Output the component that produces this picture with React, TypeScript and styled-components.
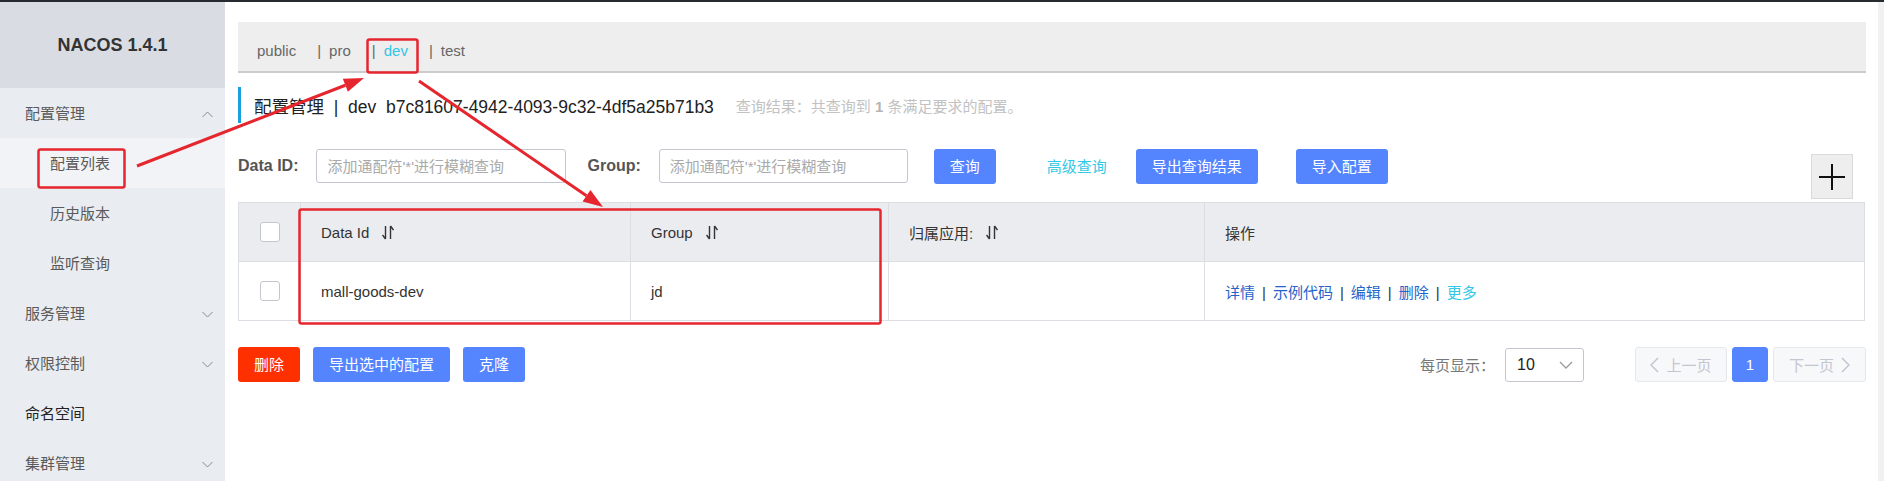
import React from 'react';
import styled, { createGlobalStyle } from 'styled-components';

const GlobalStyle = createGlobalStyle`
  html, body {
    margin: 0;
    padding: 0;
    background: #fff;
  }
  body {
    font-family: "Liberation Sans", "Noto Sans CJK SC", sans-serif;
    font-size: 15px;
    color: #333;
  }
  * {
    box-sizing: border-box;
  }
`;

const Page = styled.div`
  position: relative;
  width: 1884px;
  height: 481px;
  overflow: hidden;
  border-top: 2px solid #272b30;
  display: flex;
`;

const Sidebar = styled.aside`
  width: 225px;
  flex-shrink: 0;
  background: #e9ecf0;
  display: flex;
  flex-direction: column;
  overflow: hidden;
`;

const Brand = styled.div`
  height: 86px;
  flex-shrink: 0;
  background: #d9dde3;
  display: flex;
  align-items: center;
  justify-content: center;
  font-size: 18px;
  font-weight: bold;
  color: #333;
`;

const MenuItem = styled.div<{ sub?: boolean; active?: boolean; strong?: boolean }>`
  height: 50px;
  flex-shrink: 0;
  display: flex;
  align-items: center;
  justify-content: space-between;
  padding: 2px 12px 0 ${p => (p.sub ? '50px' : '25px')};
  background: ${p => (p.active ? '#f2f3f6' : 'transparent')};
  color: ${p => (p.strong ? '#222' : '#5a5a5a')};
  font-size: 15px;
  line-height: 20px;
`;

const Main = styled.main`
  flex: 1;
  padding: 20px 12px 0 13px;
  display: flex;
  flex-direction: column;
`;

const ScrollTrack = styled.div`
  width: 6px;
  flex-shrink: 0;
  background: #f1f1f1;
`;

const TabBar = styled.div`
  height: 51px;
  flex-shrink: 0;
  background: #eeeeee;
  border-bottom: 2px solid #cccccc;
  display: flex;
  align-items: center;
  padding: 8px 0 0 19px;
  font-size: 15px;
  line-height: 20px;
`;

const Tab = styled.span<{ current?: boolean }>`
  color: ${p => (p.current ? '#33c5e5' : '#666')};
  margin-right: 21px;
`;

const TabSep = styled.span`
  color: #666;
  margin-right: 8px;
`;

const TitleRow = styled.div`
  margin-top: 14px;
  height: 36px;
  flex-shrink: 0;
  border-left: 3px solid #1a9fe0;
  padding-left: 13px;
  display: flex;
  align-items: center;
`;

const TitleText = styled.span`
  font-size: 17.5px;
  color: #222;
  white-space: pre;
`;

const ResultText = styled.span`
  margin-left: 22px;
  font-size: 15px;
  color: #c2c2c2;
  b {
    font-weight: bold;
    color: #b5b5b5;
  }
`;

const SearchRow = styled.div`
  margin-top: 26px;
  display: flex;
  align-items: flex-start;
`;

const FieldLabel = styled.label<{ gap?: number }>`
  height: 34px;
  display: flex;
  align-items: center;
  font-size: 16px;
  font-weight: bold;
  color: #555;
  margin-left: ${p => p.gap ?? 0}px;
  margin-right: 18px;
`;

const Input = styled.input<{ w: number }>`
  width: ${p => p.w}px;
  height: 34px;
  border: 1px solid #c4c6cf;
  border-radius: 3px;
  padding: 0 10px;
  font-family: inherit;
  font-size: 15px;
  outline: none;
  &::placeholder {
    color: #aaa;
  }
`;

const Button = styled.button<{ tone?: 'primary' | 'danger' | 'link'; gap?: number }>`
  height: 35px;
  padding: 0 16px;
  border: none;
  border-radius: 3px;
  font-family: inherit;
  font-size: 15px;
  line-height: 35px;
  margin-left: ${p => p.gap ?? 0}px;
  color: ${p => (p.tone === 'link' ? '#33c8e6' : '#fff')};
  background: ${p =>
    p.tone === 'danger' ? '#ff3000' : p.tone === 'link' ? 'transparent' : '#5584ff'};
  cursor: pointer;
`;

const AddButton = styled.button`
  margin-left: auto;
  margin-top: 5px;
  margin-right: 13px;
  width: 42px;
  height: 45px;
  background: #eeeeee;
  border: 1px solid #dadada;
  display: flex;
  align-items: center;
  justify-content: center;
  padding: 0;
`;

const Table = styled.table`
  margin-top: 3px;
  width: 1626px;
  border-collapse: collapse;
  table-layout: fixed;
  border: 1px solid #dcdee3;
`;

const Th = styled.th<{ w: number }>`
  width: ${p => p.w}px;
  height: 59px;
  background: #ebecf0;
  border: 1px solid #dcdee3;
  text-align: left;
  padding: 0 20px;
  font-weight: normal;
  font-size: 15px;
  color: #333;
`;

const Td = styled.td`
  height: 59px;
  border: 1px solid #dcdee3;
  padding: 0 20px;
  font-size: 15px;
  color: #333;
`;

const CheckCell = styled.div`
  display: flex;
  justify-content: center;
`;

const Checkbox = styled.span`
  display: block;
  width: 20px;
  height: 20px;
  border: 1px solid #c4c6cf;
  border-radius: 3px;
  background: #fff;
`;

const HeadLabel = styled.span`
  display: inline-flex;
  align-items: center;
  gap: 13px;
`;

const Action = styled.a<{ more?: boolean }>`
  color: ${p => (p.more ? '#33c8e6' : '#2463c9')};
  text-decoration: none;
`;

const ActionSep = styled.span`
  color: #333;
  margin: 0 7px;
`;

const FooterRow = styled.div`
  margin-top: 26px;
  display: flex;
  align-items: center;
`;

const PagerGroup = styled.div`
  margin-left: auto;
  display: flex;
  align-items: center;
`;

const PageSizeLabel = styled.span`
  color: #777;
  font-size: 15px;
  margin-right: 10px;
`;

const Select = styled.div`
  width: 79px;
  height: 34px;
  border: 1px solid #c4c6cf;
  border-radius: 3px;
  display: flex;
  align-items: center;
  justify-content: space-between;
  padding: 0 10px 0 11px;
  font-size: 16px;
  color: #222;
  margin-right: 51px;
`;

const PageBtn = styled.div<{ active?: boolean; w: number; first?: boolean }>`
  width: ${p => p.w}px;
  height: 35px;
  margin-left: ${p => (p.first ? 0 : 5)}px;
  border-radius: 3px;
  display: flex;
  align-items: center;
  justify-content: center;
  gap: 7px;
  font-size: 15px;
  background: ${p => (p.active ? '#5584ff' : '#f7f8fa')};
  border: 1px solid ${p => (p.active ? '#5584ff' : '#e6e7eb')};
  color: ${p => (p.active ? '#fff' : '#c4c6cf')};
`;

const Overlay = styled.svg`
  position: absolute;
  left: 0;
  top: 0;
  pointer-events: none;
`;

const Chevron = ({ up }: { up?: boolean }) => (
  <svg width="11" height="7" viewBox="0 0 11 7">
    <polyline
      points={up ? '0.5,6 5.5,1 10.5,6' : '0.5,1 5.5,6 10.5,1'}
      fill="none"
      stroke="#8a8a8a"
      strokeWidth="1"
    />
  </svg>
);

const SortIcon = () => (
  <svg width="12" height="15" viewBox="0 0 12 15">
    <path d="M3.5 1v13M3.5 14L0.5 10" stroke="#333" strokeWidth="1.4" fill="none" />
    <path d="M8.5 14V1M8.5 1l3 4" stroke="#333" strokeWidth="1.4" fill="none" />
  </svg>
);

const ArrowLeft = () => (
  <svg width="9" height="16" viewBox="0 0 9 16">
    <polyline points="8,1 1,8 8,15" fill="none" stroke="#c4c6cf" strokeWidth="1.5" />
  </svg>
);

const ArrowRight = () => (
  <svg width="9" height="16" viewBox="0 0 9 16">
    <polyline points="1,1 8,8 1,15" fill="none" stroke="#c4c6cf" strokeWidth="1.5" />
  </svg>
);

const menu = [
  { label: '配置管理', chevron: 'up' },
  { label: '配置列表', sub: true, active: true },
  { label: '历史版本', sub: true },
  { label: '监听查询', sub: true },
  { label: '服务管理', chevron: 'down' },
  { label: '权限控制', chevron: 'down' },
  { label: '命名空间', strong: true },
  { label: '集群管理', chevron: 'down' },
];

const namespaces = ['public', 'pro', 'dev', 'test'];

// red annotation arrow, head drawn at (x2, y2)
const Arrow = ({ x1, y1, x2, y2 }: { x1: number; y1: number; x2: number; y2: number }) => {
  const a = Math.atan2(y2 - y1, x2 - x1);
  const len = 20;
  const half = 7;
  const bx = x2 - len * Math.cos(a);
  const by = y2 - len * Math.sin(a);
  const px = -Math.sin(a) * half;
  const py = Math.cos(a) * half;
  return (
    <g>
      <line x1={x1} y1={y1} x2={bx} y2={by} stroke="#e5262e" strokeWidth="3" />
      <polygon
        points={`${x2},${y2} ${bx + px},${by + py} ${bx - px},${by - py}`}
        fill="#e5262e"
      />
    </g>
  );
};

const Annotations = () => (
  <Overlay width="1884" height="481" viewBox="0 0 1884 481">
    <g fill="none" stroke="#e5262e" strokeWidth="2.5">
      <rect x="38.5" y="147.5" width="86" height="38" rx="2" />
      <rect x="367.5" y="37.5" width="50" height="33" rx="2" />
      <rect x="299.5" y="207.5" width="581" height="114" rx="2" />
    </g>
    <Arrow x1={137} y1={164} x2={364} y2={76} />
    <Arrow x1={419} y1={79} x2={603} y2={205} />
  </Overlay>
);

export default function App() {
  return (
    <>
      <GlobalStyle />
      <Page>
        <Sidebar>
          <Brand>NACOS 1.4.1</Brand>
          {menu.map(m => (
            <MenuItem key={m.label} sub={m.sub} active={m.active} strong={m.strong}>
              <span>{m.label}</span>
              {m.chevron && <Chevron up={m.chevron === 'up'} />}
            </MenuItem>
          ))}
        </Sidebar>

        <Main>
          <TabBar>
            {namespaces.map((ns, i) => (
              <React.Fragment key={ns}>
                {i > 0 && <TabSep>|</TabSep>}
                <Tab current={ns === 'dev'}>{ns}</Tab>
              </React.Fragment>
            ))}
          </TabBar>

          <TitleRow>
            <TitleText>{'配置管理  |  dev  b7c81607-4942-4093-9c32-4df5a25b71b3'}</TitleText>
            <ResultText>
              查询结果：共查询到 <b>1</b> 条满足要求的配置。
            </ResultText>
          </TitleRow>

          <SearchRow>
            <FieldLabel>Data ID:</FieldLabel>
            <Input w={250} placeholder="添加通配符'*'进行模糊查询" />
            <FieldLabel gap={21}>Group:</FieldLabel>
            <Input w={249} placeholder="添加通配符'*'进行模糊查询" />
            <Button tone="primary" gap={26}>查询</Button>
            <Button tone="link" gap={35}>高级查询</Button>
            <Button tone="primary" gap={13}>导出查询结果</Button>
            <Button tone="primary" gap={38}>导入配置</Button>
            <AddButton aria-label="新建配置">
              <svg width="26" height="26" viewBox="0 0 26 26">
                <path d="M13 0v26M0 13h26" stroke="#111" strokeWidth="2" />
              </svg>
            </AddButton>
          </SearchRow>

          <Table>
            <thead>
              <tr>
                <Th w={62}>
                  <CheckCell>
                    <Checkbox />
                  </CheckCell>
                </Th>
                <Th w={330}>
                  <HeadLabel>
                    Data Id <SortIcon />
                  </HeadLabel>
                </Th>
                <Th w={258}>
                  <HeadLabel>
                    Group <SortIcon />
                  </HeadLabel>
                </Th>
                <Th w={316}>
                  <HeadLabel>
                    归属应用: <SortIcon />
                  </HeadLabel>
                </Th>
                <Th w={660}>操作</Th>
              </tr>
            </thead>
            <tbody>
              <tr>
                <Td>
                  <CheckCell>
                    <Checkbox />
                  </CheckCell>
                </Td>
                <Td>mall-goods-dev</Td>
                <Td>jd</Td>
                <Td />
                <Td>
                  <Action>详情</Action>
                  <ActionSep>|</ActionSep>
                  <Action>示例代码</Action>
                  <ActionSep>|</ActionSep>
                  <Action>编辑</Action>
                  <ActionSep>|</ActionSep>
                  <Action>删除</Action>
                  <ActionSep>|</ActionSep>
                  <Action more>更多</Action>
                </Td>
              </tr>
            </tbody>
          </Table>

          <FooterRow>
            <Button tone="danger">删除</Button>
            <Button tone="primary" gap={13}>导出选中的配置</Button>
            <Button tone="primary" gap={13}>克隆</Button>
            <PagerGroup>
              <PageSizeLabel>每页显示：</PageSizeLabel>
              <Select>
                <span>10</span>
                <svg width="14" height="8" viewBox="0 0 14 8">
                  <polyline points="1,1 7,7 13,1" fill="none" stroke="#999" strokeWidth="1.3" />
                </svg>
              </Select>
              <PageBtn w={92} first>
                <ArrowLeft />
                上一页
              </PageBtn>
              <PageBtn w={36} active>
                1
              </PageBtn>
              <PageBtn w={93}>
                下一页
                <ArrowRight />
              </PageBtn>
            </PagerGroup>
          </FooterRow>
        </Main>
        <ScrollTrack />
        <Annotations />
      </Page>
    </>
  );
}
